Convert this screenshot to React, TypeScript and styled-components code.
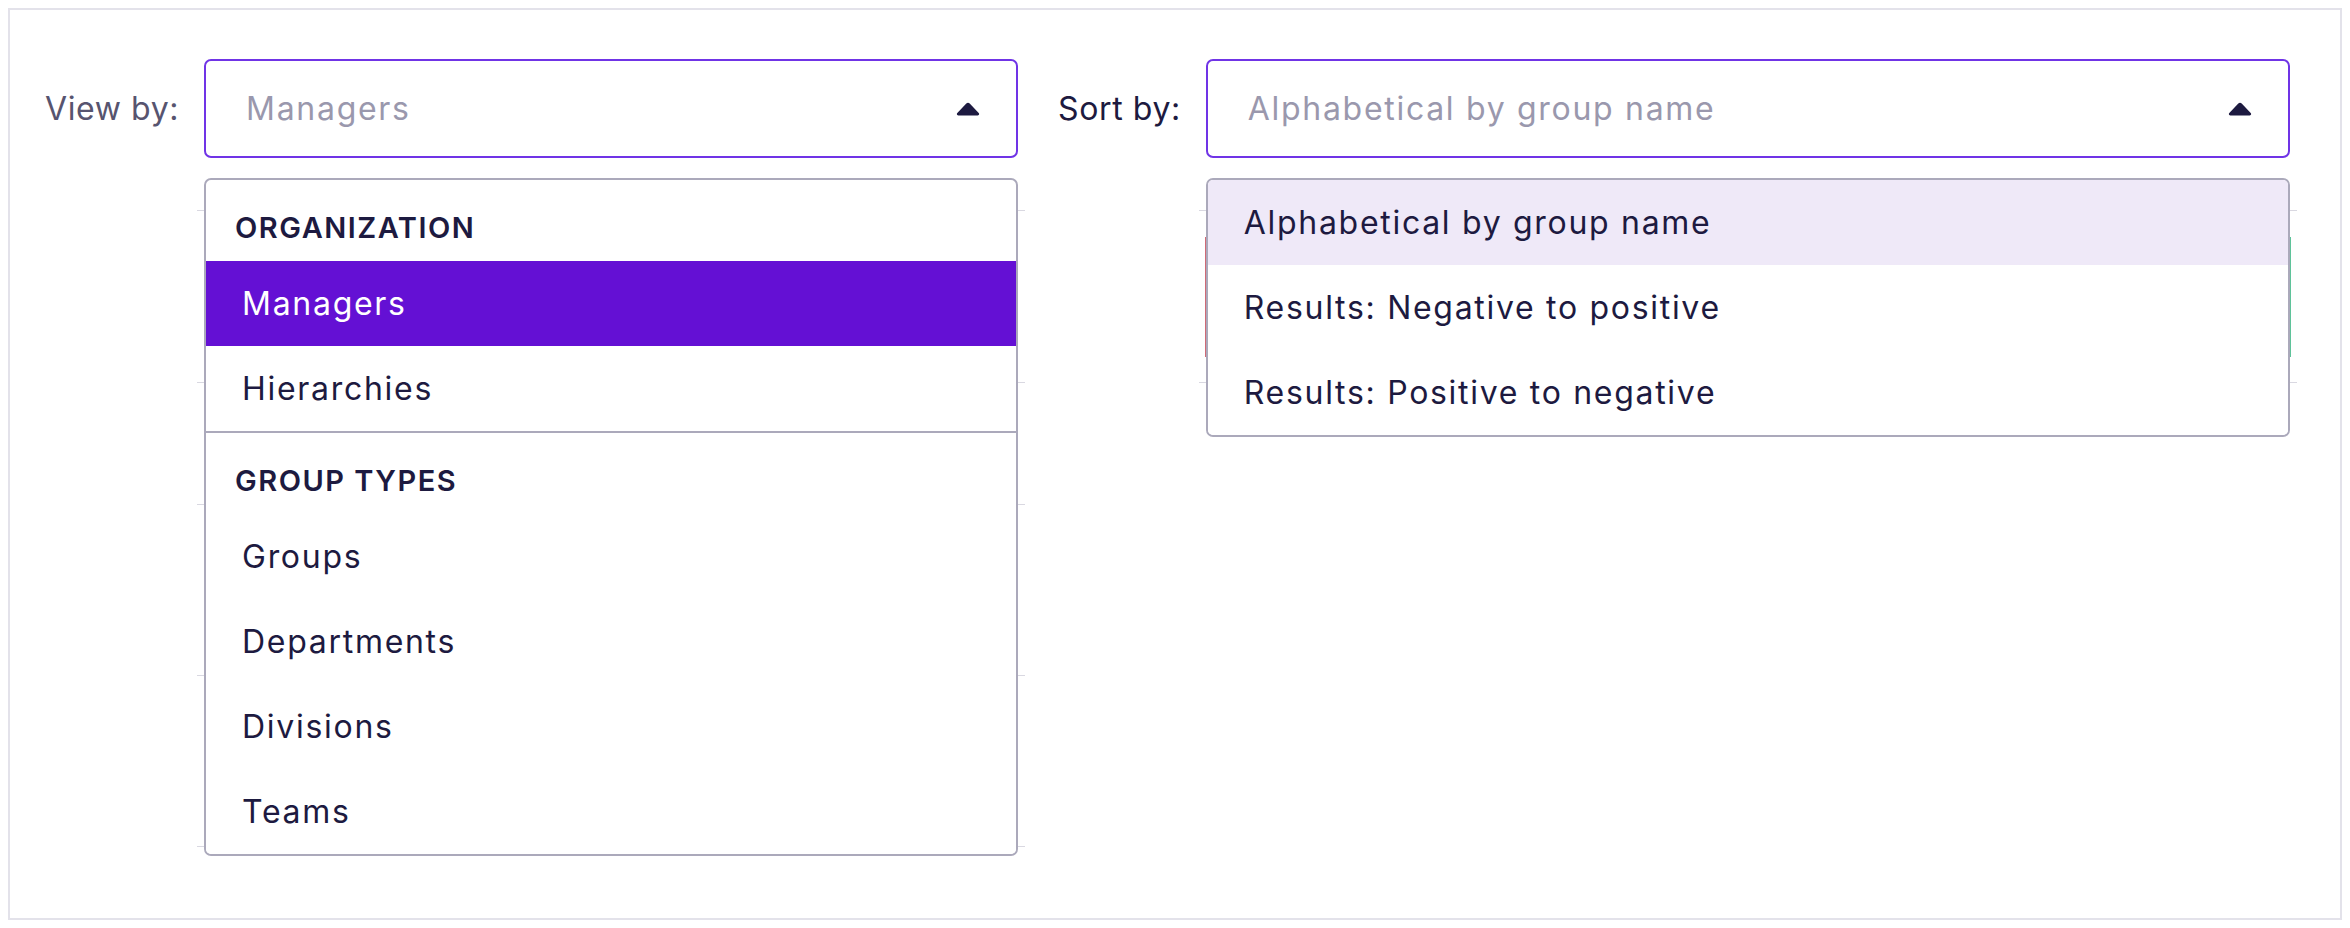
import * as React from 'react';
import styled, { createGlobalStyle } from 'styled-components';

const GlobalStyle = createGlobalStyle`
    html, body {
        margin: 0;
        padding: 0;
        background: #ffffff;
    }
    body {
        font-family: Inter, "Noto Sans", sans-serif;
        color: #1d1a40;
    }
`;

const Frame = styled.div`
    margin: 8px;
    height: 912px;
    box-sizing: border-box;
    border: 2px solid #e3e2ea;
    padding: 49px 50px 0 35px;
`;

const Toolbar = styled.div`
    display: flex;
    align-items: flex-start;
    gap: 40px;
`;

const Field = styled.div<{ $width?: number }>`
    display: grid;
    grid-template-columns: auto ${p => (p.$width ? `${p.$width}px` : '1fr')};
    column-gap: 25px;
    flex: ${p => (p.$width ? '0 0 auto' : '1 1 auto')};
`;

const Label = styled.label<{ $muted?: boolean }>`
    display: flex;
    align-items: center;
    height: 99px;
    font-size: 32px;
    letter-spacing: 0.6px;
    color: ${p => (p.$muted ? '#57546f' : '#1d1a40')};
    white-space: nowrap;
`;

const Control = styled.div`
    position: relative;
`;

const SelectBox = styled.button`
    display: flex;
    align-items: center;
    justify-content: space-between;
    width: 100%;
    height: 99px;
    box-sizing: border-box;
    padding: 0 36px 0 40px;
    background: #ffffff;
    border: 2px solid #7034e6;
    border-radius: 7px;
    font-family: inherit;
    font-size: 32px;
    letter-spacing: 1.7px;
    color: #9a98ad;
    text-align: left;
    cursor: pointer;
`;

const Menu = styled.ul`
    position: absolute;
    top: calc(100% + 20px);
    left: 0;
    right: 0;
    z-index: 2;
    margin: 0;
    padding: 0;
    list-style: none;
    background: #ffffff;
    border: 2px solid #aba9bb;
    border-radius: 7px;
    overflow: hidden;
`;

const MenuHeader = styled.li`
    padding: 30px 29px 15px;
    font-size: 29px;
    line-height: 36px;
    font-weight: 600;
    letter-spacing: 1.5px;
    color: #1d1a40;
`;

const MenuItem = styled.li<{ $state?: 'selected' | 'active' }>`
    padding: 24px 36px;
    font-size: 32px;
    line-height: 37px;
    letter-spacing: 1.7px;
    background: ${p => (p.$state === 'selected' ? '#6410d4' : p.$state === 'active' ? '#efe9f8' : '#ffffff')};
    color: ${p => (p.$state === 'selected' ? '#ffffff' : '#1d1a40')};
`;

const MenuDivider = styled.li`
    height: 2px;
    background: #aba9bb;
`;

const Backdrop = styled.div`
    grid-column: 2;
    margin: 0 -7px;
`;

const BackdropRow = styled.div<{ $h: number }>`
    height: ${p => p.$h}px;
    box-sizing: border-box;
    border-bottom: 1px solid #d9d8e1;
    display: flex;
    align-items: center;
`;

const ScoreBar = styled.div`
    flex: 1;
    height: 120px;
    margin: 0 6px;
    background: linear-gradient(to right, #d06a76 0 2px, #f4f3f7 2px calc(100% - 2px), #5fc39a calc(100% - 2px));
`;

const Caret = () => (
    <svg width="24" height="14" viewBox="0 0 24 14" aria-hidden="true">
        <path d="M10.3 1.6a2.3 2.3 0 0 1 3.4 0l9 9.4c.9 1 .3 2.5-1.1 2.5H2.4c-1.4 0-2-1.5-1.1-2.5z" fill="#1d1a40" />
    </svg>
);

const viewGroups = [
    { title: 'ORGANIZATION', items: ['Managers', 'Hierarchies'] },
    { title: 'GROUP TYPES', items: ['Groups', 'Departments', 'Divisions', 'Teams'] },
];

const sortOptions = [
    'Alphabetical by group name',
    'Results: Negative to positive',
    'Results: Positive to negative',
];

export default function App()
{
    const [viewBy, setViewBy] = React.useState('Managers');
    const [sortBy, setSortBy] = React.useState(sortOptions[0]);

    return (<>
        <GlobalStyle />
        <Frame>
            <Toolbar>
                <Field $width={814}>
                    <Label $muted>View by:</Label>
                    <Control>
                        <SelectBox>
                            <span>{viewBy}</span>
                            <Caret />
                        </SelectBox>
                        <Menu>
                            {viewGroups.map((group, i) => (
                                <React.Fragment key={group.title}>
                                    {i > 0 && <MenuDivider />}
                                    <MenuHeader>{group.title}</MenuHeader>
                                    {group.items.map(item => (
                                        <MenuItem
                                            key={item}
                                            $state={item === viewBy ? 'selected' : undefined}
                                            onClick={() => setViewBy(item)}
                                        >
                                            {item}
                                        </MenuItem>
                                    ))}
                                </React.Fragment>
                            ))}
                        </Menu>
                    </Control>
                    <Backdrop>
                        {[53, 172, 122, 171, 171].map((h, i) => <BackdropRow key={i} $h={h} />)}
                    </Backdrop>
                </Field>
                <Field>
                    <Label>Sort by:</Label>
                    <Control>
                        <SelectBox>
                            <span>{sortBy}</span>
                            <Caret />
                        </SelectBox>
                        <Menu>
                            {sortOptions.map(option => (
                                <MenuItem
                                    key={option}
                                    $state={option === sortBy ? 'active' : undefined}
                                    onClick={() => setSortBy(option)}
                                >
                                    {option}
                                </MenuItem>
                            ))}
                        </Menu>
                    </Control>
                    <Backdrop>
                        <BackdropRow $h={53} />
                        <BackdropRow $h={172}>
                            <ScoreBar />
                        </BackdropRow>
                    </Backdrop>
                </Field>
            </Toolbar>
        </Frame>
    </>);
}
